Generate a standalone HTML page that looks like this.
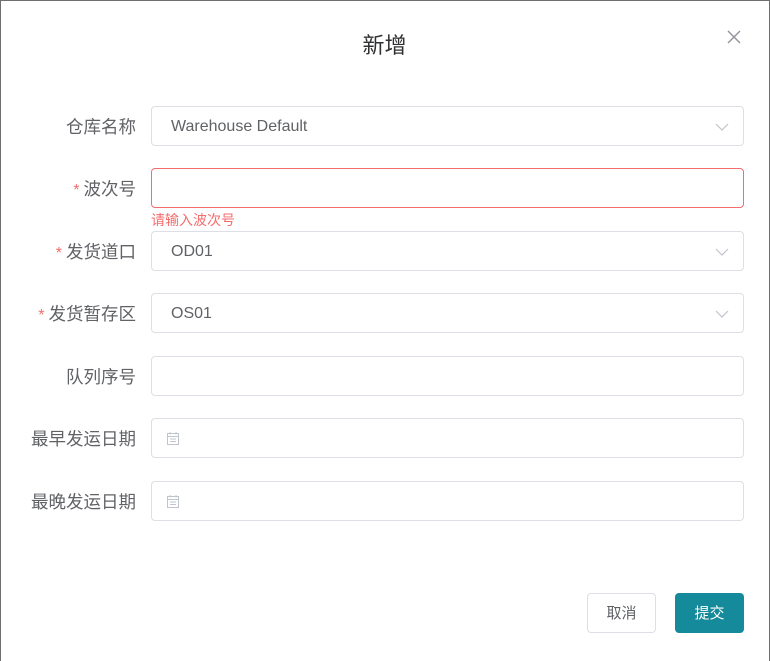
<!DOCTYPE html>
<html><head><meta charset="utf-8"><style>
html,body{margin:0;padding:0;width:770px;height:656px;overflow:hidden;background:#6f6f6f;font-family:"Liberation Sans","Noto Sans CJK SC",sans-serif;}
.dlg{position:absolute;left:1px;top:1px;width:768px;height:660px;background:#fff;}
.title{position:absolute;left:0;width:767px;top:27px;text-align:center;font-size:22px;color:#303133;}
.close{position:absolute;left:726px;top:29px;}
.lbl{position:absolute;right:633px;font-size:17.5px;color:#606266;white-space:nowrap;line-height:42px;}
.lbl .s{color:#f56c6c;margin-right:4px;font-size:16px;}
.inp{position:absolute;left:150px;width:591px;height:38px;border:1px solid #dcdfe6;border-radius:4px;font-size:16px;color:#606266;line-height:40px;box-sizing:content-box;}
.inp .t{position:absolute;left:19px;}
.inp.err{border-color:#f56c6c;}
.arr{position:absolute;right:14px;top:15px;}
.cal{position:absolute;left:14px;top:12px;}
.msg{position:absolute;left:150px;top:209px;font-size:14px;color:#f56c6c;}
.btn{position:absolute;top:592px;height:38px;width:67px;border-radius:4px;font-size:15px;text-align:center;line-height:40px;}
</style></head><body>
<div class="dlg">
<div class="title">新增</div>
<svg class="close" width="14" height="14" viewBox="0 0 14 14"><path d="M1 1L13 13M13 1L1 13" stroke="#909399" stroke-width="1.4"/></svg>

<div class="lbl" style="top:105px">仓库名称</div>
<div class="inp" style="top:105px"><span class="t">Warehouse Default</span><svg class="arr" width="14" height="10" viewBox="0 0 14 10"><path d="M1 2L7 8L13 2" stroke="#c0c4cc" stroke-width="1.2" fill="none"/></svg></div>

<div class="lbl" style="top:167px"><span class="s">*</span>波次号</div>
<div class="inp err" style="top:167px"></div>
<div class="msg">请输入波次号</div>

<div class="lbl" style="top:230px"><span class="s">*</span>发货道口</div>
<div class="inp" style="top:230px"><span class="t" style="left:19px">OD01</span><svg class="arr" width="14" height="10" viewBox="0 0 14 10"><path d="M1 2L7 8L13 2" stroke="#c0c4cc" stroke-width="1.2" fill="none"/></svg></div>

<div class="lbl" style="top:292px"><span class="s">*</span>发货暂存区</div>
<div class="inp" style="top:292px"><span class="t">OS01</span><svg class="arr" width="14" height="10" viewBox="0 0 14 10"><path d="M1 2L7 8L13 2" stroke="#c0c4cc" stroke-width="1.2" fill="none"/></svg></div>

<div class="lbl" style="top:355px">队列序号</div>
<div class="inp" style="top:355px"></div>

<div class="lbl" style="top:417px">最早发运日期</div>
<div class="inp" style="top:417px"><svg class="cal" width="14" height="15" viewBox="0 0 14 15"><rect x="1.5" y="2.5" width="11" height="11" fill="none" stroke="#c0c4cc"/><path d="M1.5 5.5H12.5M4 1V3.5M10 1V3.5M4 8H10M4 10.5H10" stroke="#c0c4cc"/></svg></div>

<div class="lbl" style="top:480px">最晚发运日期</div>
<div class="inp" style="top:480px"><svg class="cal" width="14" height="15" viewBox="0 0 14 15"><rect x="1.5" y="2.5" width="11" height="11" fill="none" stroke="#c0c4cc"/><path d="M1.5 5.5H12.5M4 1V3.5M10 1V3.5M4 8H10M4 10.5H10" stroke="#c0c4cc"/></svg></div>

<div class="btn" style="left:586px;border:1px solid #dcdfe6;color:#606266;background:#fff;">取消</div>
<div class="btn" style="left:674px;width:69px;height:40px;line-height:42px;background:#148a9a;color:#fff;">提交</div>
</div>
</body></html>
